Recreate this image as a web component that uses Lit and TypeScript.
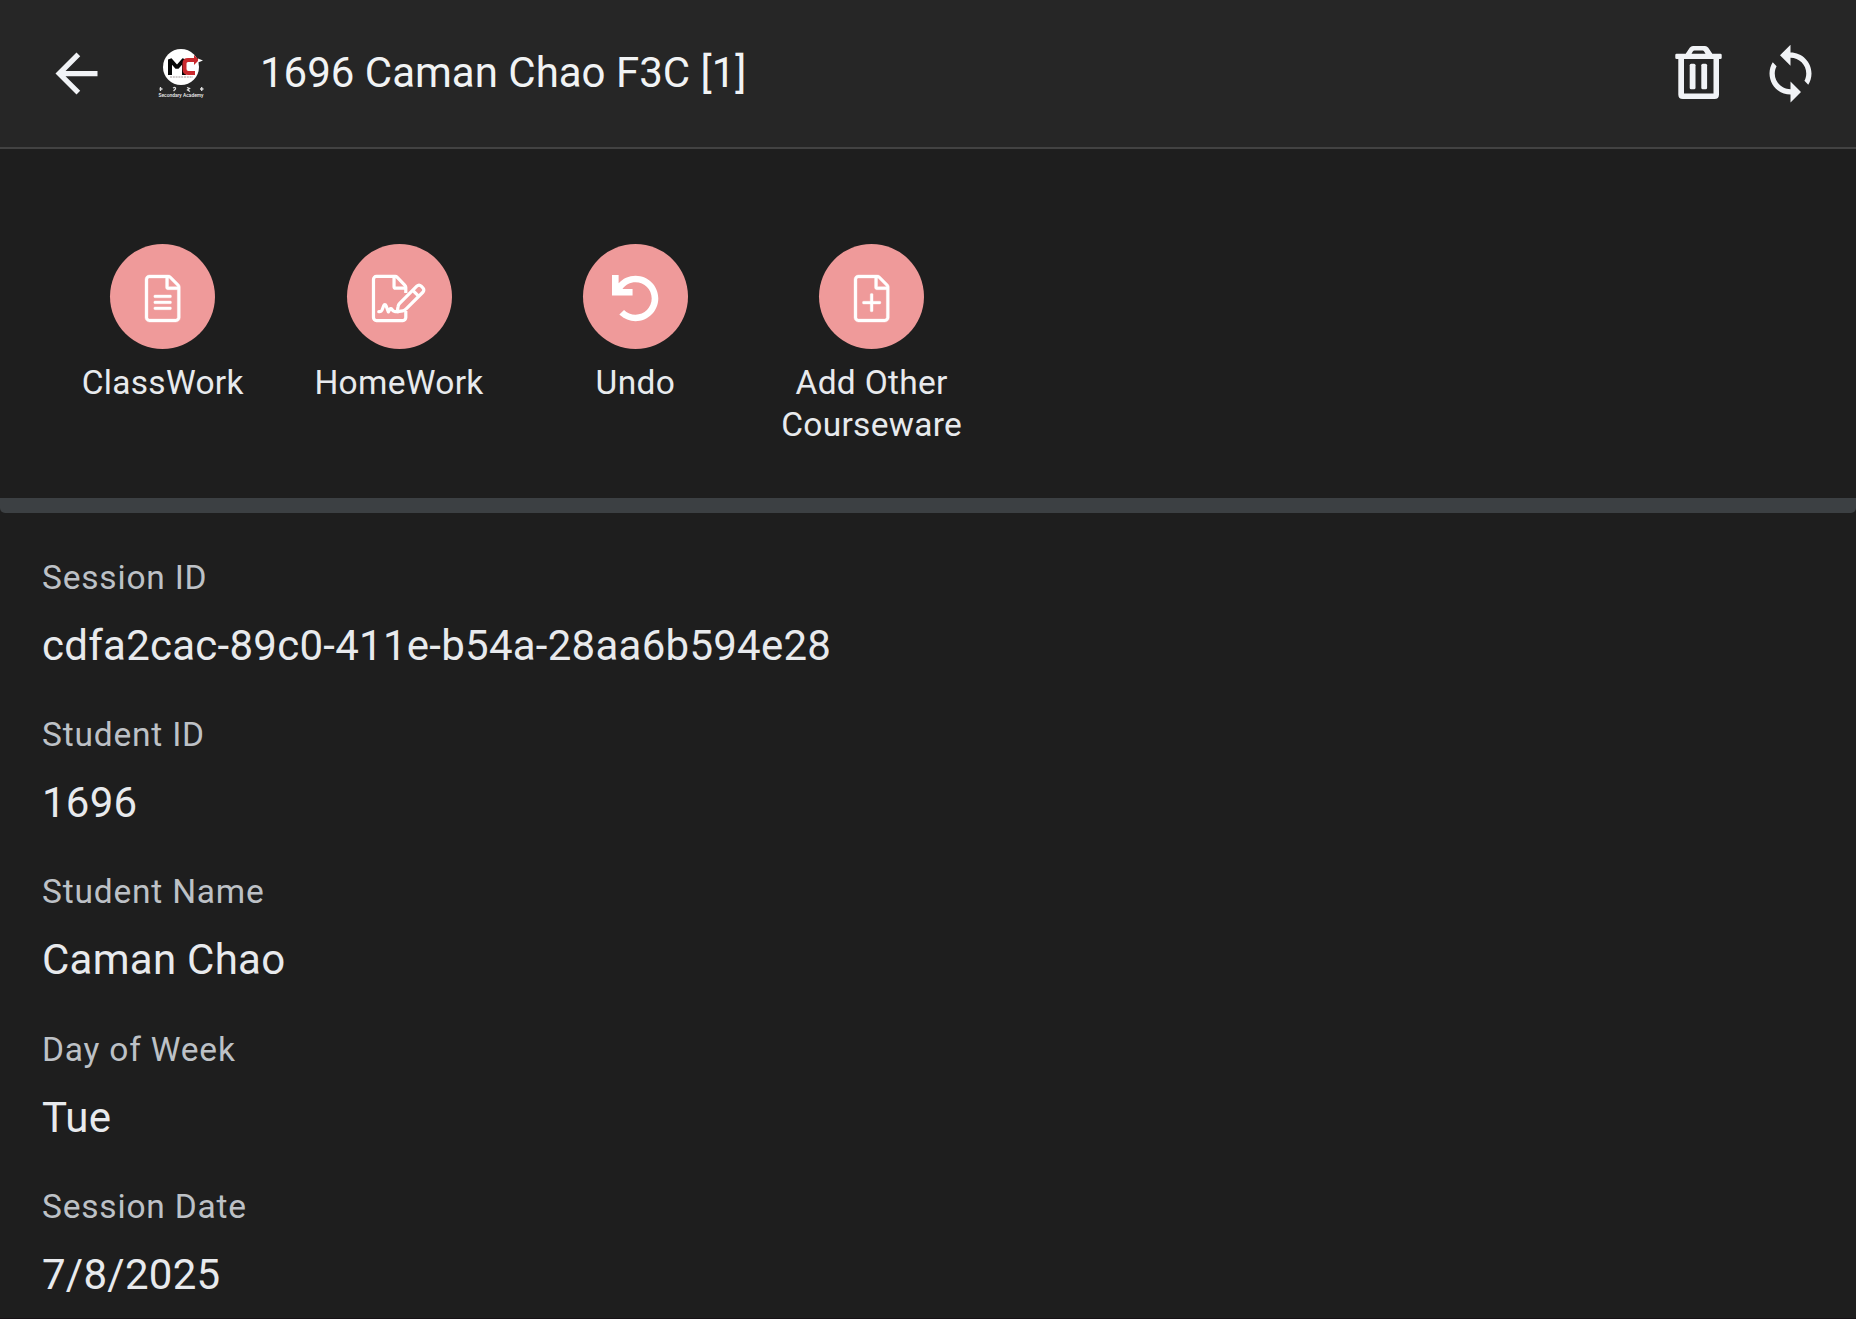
import { LitElement, html, css, svg } from "lit";
import { customElement, property } from "lit/decorators.js";

const PAGE =
  "M369.9 97.9L286 14C277 5 264.8 0 252.1 0H48C21.5 0 0 21.5 0 48v416c0 26.5 21.5 48 48 48h288c26.5 0 48-21.5 48-48V131.9c0-12.7-5.1-25-14.1-34zm-22.6 22.7c2.1 2.1 3.5 4.6 4.2 7.4H256V32.5c2.8.7 5.3 2.1 7.4 4.2l83.9 83.9zM336 480H48c-8.8 0-16-7.2-16-16V48c0-8.8 7.2-16 16-16h176v104c0 13.3 10.7 24 24 24h104v304c0 8.8-7.2 16-16 16z";

const GLYPHS = {
  file: {
    box: "0 0 384 512",
    width: 35.3,
    shape: svg`<g stroke="#fff" stroke-width="4"><path d=${PAGE}/>
      <rect x="96" y="218" width="192" height="30" rx="12"/>
      <rect x="96" y="283" width="192" height="30" rx="12"/>
      <rect x="96" y="348" width="192" height="30" rx="12"/></g>`,
  },
  plus: {
    box: "0 0 384 512",
    width: 35.3,
    shape: svg`<g stroke="#fff" stroke-width="4"><path d=${PAGE}/>
      <rect x="92" y="286" width="200" height="30" rx="12"/>
      <rect x="177" y="201" width="30" height="200" rx="12"/></g>`,
  },
  sign: {
    box: "0 0 588 512",
    width: 54,
    shape: svg`<g fill="none" stroke="#fff" stroke-width="35" stroke-linejoin="round">
      <path d="M368 196V136c0-9-3-17-9-23L275 25c-6-6-14-9-23-9H48c-18 0-32 14-32 32v416c0 18 14 32 32 32h288c18 0 32-14 32-32V392"/>
      <path d="M240 20V128c0 9 7 16 16 16H366"/>
      <path stroke-linecap="round" d="M74 400h12c12 0 18-6 22-16l20-52c5-13 19-13 24 0l26 70 16-30c6-9 16-9 22 0 8 16 18 26 34 26h40"/>
      <path d="M274 399L284 344C286 330 291 319 301 309L488 122c14-14 34-14 48 0l18 18c14 14 14 34 0 48L372 370C360 382 350 388 336 390z"/>
      <path d="M444 168l66 66"/></g>`,
  },
  undo: {
    box: "0 0 512 512",
    width: 47,
    shape: svg`<path d="M212.333 224.333H0V0H72V90.112C117.773 39.279 184.26 7.47 258.175 8.007c136.906.994 246.448 111.623 246.157 248.532C504.041 393.258 393.12 504 256.333 504c-64.089 0-122.496-24.313-166.51-64.215L80 431l51-51c30 34 80 52 125.333 52 97.268 0 176-78.716 176-176 0-97.267-78.716-176-176-176-58.496 0-110.28 28.476-142.274 72.333H224v72z"/>`,
  },
};

type GlyphName = keyof typeof GLYPHS;

@customElement("action-button")
class ActionButton extends LitElement {
  @property() glyph: GlyphName = "file";
  @property() label = "";

  static styles = css`
    :host {
      display: flex;
      flex-direction: column;
      align-items: center;
      color: #e8eaed;
    }
    .disc {
      display: flex;
      align-items: center;
      justify-content: center;
      width: 105px;
      height: 105px;
      border-radius: 50%;
      background: #ef9a9a;
    }
    .glyph {
      height: 47px;
      fill: #fff;
      display: block;
      margin-top: 4px;
      overflow: visible;
    }
    .label {
      width: 200px;
      margin-top: 13px;
      font-size: 33.5px;
      line-height: 42px;
      text-align: center;
      letter-spacing: 0.3px;
    }
  `;

  render() {
    const g = GLYPHS[this.glyph];
    return html`
      <div class="disc">
        <svg class="glyph" width=${g.width} viewBox=${g.box}>${g.shape}</svg>
      </div>
      <div class="label">${this.label}</div>
    `;
  }
}

@customElement("app-root")
class AppRoot extends LitElement {
  static styles = css`
    :host {
      display: block;
      box-sizing: border-box;
      height: 1319px;
      overflow: hidden;
      background: #1e1e1e;
      border-bottom: 1px solid #171216;
      font-family: Roboto, sans-serif;
    }
    .bar {
      box-sizing: border-box;
      display: flex;
      align-items: center;
      height: 149px;
      padding: 0 34px 0 45px;
      background: #262626;
      border-bottom: 2px solid #424242;
      color: #f1f3f4;
    }
    .icon {
      width: 63px;
      height: 63px;
      fill: #f1f3f6;
      flex: none;
    }
    .logo {
      width: 52px;
      height: 52px;
      margin-left: 47px;
      flex: none;
    }
    .title {
      flex: 1;
      margin: 0 0 2px 53px;
      font-size: 42px;
      font-weight: 400;
      line-height: 52px;
      white-space: nowrap;
    }
    .sync {
      margin-left: 29px;
    }
    .actions {
      display: grid;
      grid-template-columns: repeat(4, 236.3px);
      height: 254px;
      padding: 95px 0 0 44.6px;
    }
    .divider {
      height: 15px;
      background: #3c4043;
      border-radius: 0 0 5px 5px;
    }
    .fields {
      margin: 0;
      padding: 44px 42px 0;
    }
    .field {
      height: 157.2px;
    }
    .name {
      font-size: 33.5px;
      line-height: 42px;
      letter-spacing: 0.8px;
      color: #bdc1c6;
    }
    .value {
      margin: 21px 0 0;
      font-size: 42px;
      line-height: 52px;
      letter-spacing: 0.26px;
      color: #e8eaed;
    }
  `;

  private actions: { glyph: GlyphName; label: string }[] = [
    { glyph: "file", label: "ClassWork" },
    { glyph: "sign", label: "HomeWork" },
    { glyph: "undo", label: "Undo" },
    { glyph: "plus", label: "Add Other Courseware" },
  ];

  private fields = [
    ["Session ID", "cdfa2cac-89c0-411e-b54a-28aa6b594e28"],
    ["Student ID", "1696"],
    ["Student Name", "Caman Chao"],
    ["Day of Week", "Tue"],
    ["Session Date", "7/8/2025"],
  ];

  render() {
    return html`
      <header class="bar">
        <svg class="icon" viewBox="0 0 24 24">
          <path d="M20 11H7.83l5.59-5.59L12 4l-8 8 8 8 1.41-1.41L7.83 13H20v-2z" />
        </svg>
        <svg class="logo" viewBox="0 0 52 52">
          <circle cx="26" cy="19" r="18" fill="#fff" />
          <path d="M15 27V11.500l7 8 7-8V27" fill="none" stroke="#080808" stroke-width="4" stroke-linejoin="bevel" />
          <path d="M40 25H33.500Q29.500 25 29.500 21V15.500Q29.500 12 33 12H41" fill="none" stroke="#c9292d" stroke-width="4" />
          <path d="M39 7L44 12 39 17z" fill="#c9292d" />
          <path d="M43 10.500L48 12.500 43 14.500z" fill="#fff" />
          <path d="M15 29H38" stroke="#998c8c" stroke-width=".9" stroke-dasharray="2 .8" />
          <path d="M5.500 39v4M4.500 41l3 0M18 40q3-1.500 2.500 1l-2 2M32 39.500l2.500 1-2 1.500 2.500 1.500M45 41h3.500M46.700 39v4" fill="none" stroke="#ddd" stroke-width="1.300" />
          <text x="3.500" y="49" textLength="45" lengthAdjust="spacingAndGlyphs" font-size="5.200" font-weight="500" fill="#eee">Secondary Academy</text>
        </svg>
        <h1 class="title">1696 Caman Chao F3C [1]</h1>
        <svg class="icon" viewBox="0 0 63 63">
          <path fill-rule="evenodd" d="M8.300 13q0-1.300 1.300-1.300h9.100l4-6q1.300-1.700 3.300-1.700h12q2 0 3.300 1.700l4 6h8.100q1.300 0 1.300 1.300v2.700q0 1.300-1.300 1.300H52v35.500q0 4.500-4.500 4.500H15.800q-4.500 0-4.500-4.500V17H9.600q-1.300 0-1.300-1.300zM24.500 11.700h14l-1.500-2.500q-.5-.8-1.500-.8h-8q-1 0-1.500.8zM17 17v34.500h29.500V17z" />
          <rect x="22.700" y="21.700" width="5.800" height="25.500" rx="1.500" />
          <rect x="34.300" y="21.700" width="5.800" height="25.500" rx="1.500" />
        </svg>
        <svg class="icon sync" viewBox="0 0 24 24">
          <path d="M12 4V1L8 5l4 4V6c3.310 0 6 2.690 6 6 0 1.010-.25 1.970-.7 2.800l1.460 1.460C19.540 15.030 20 13.570 20 12c0-4.420-3.580-8-8-8zm0 14c-3.310 0-6-2.690-6-6 0-1.010.25-1.970.7-2.800L5.240 7.740C4.460 8.970 4 10.430 4 12c0 4.420 3.580 8 8 8v3l4-4-4-4v3z" />
        </svg>
      </header>
      <nav class="actions">
        ${this.actions.map(
          (a) => html`<action-button .glyph=${a.glyph} .label=${a.label}></action-button>`
        )}
      </nav>
      <div class="divider"></div>
      <dl class="fields">
        ${this.fields.map(
          ([name, value]) => html`<div class="field">
            <dt class="name">${name}</dt>
            <dd class="value">${value}</dd>
          </div>`
        )}
      </dl>
    `;
  }
}
